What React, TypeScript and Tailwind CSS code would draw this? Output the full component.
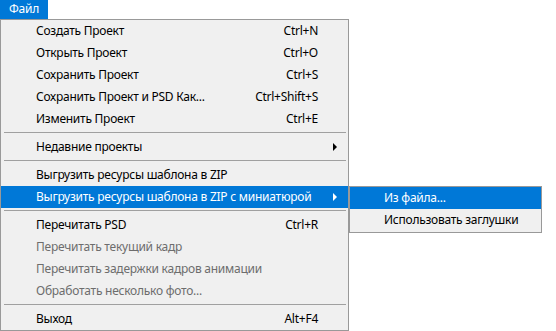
import React from "react";

type Item =
  | { type: "sep" }
  | { type: "item"; label: string; shortcut?: string; disabled?: boolean; sub?: boolean; active?: boolean };

const items: Item[] = [
  { type: "item", label: "Создать Проект", shortcut: "Ctrl+N" },
  { type: "item", label: "Открыть Проект", shortcut: "Ctrl+O" },
  { type: "item", label: "Сохранить Проект", shortcut: "Ctrl+S" },
  { type: "item", label: "Сохранить Проект и PSD Как...", shortcut: "Ctrl+Shift+S" },
  { type: "item", label: "Изменить Проект", shortcut: "Ctrl+E" },
  { type: "sep" },
  { type: "item", label: "Недавние проекты", sub: true },
  { type: "sep" },
  { type: "item", label: "Выгрузить ресурсы шаблона в ZIP" },
  { type: "item", label: "Выгрузить ресурсы шаблона в ZIP с миниатюрой", sub: true, active: true },
  { type: "sep" },
  { type: "item", label: "Перечитать PSD", shortcut: "Ctrl+R" },
  { type: "item", label: "Перечитать текущий кадр", disabled: true },
  { type: "item", label: "Перечитать задержки кадров анимации", disabled: true },
  { type: "item", label: "Обработать несколько фото...", disabled: true },
  { type: "sep" },
  { type: "item", label: "Выход", shortcut: "Alt+F4" },
];

function Arrow({ white }: { white?: boolean }) {
  return (
    <svg width="4" height="8" viewBox="0 0 4 8" className="absolute right-[11px] top-[7px]">
      <path d="M0 0 L4 4 L0 8 Z" fill={white ? "#ffffff" : "#000000"} />
    </svg>
  );
}

export default function App() {
  return (
    <div
      className="relative w-[556px] h-[331px] overflow-hidden bg-white text-[12px] leading-[22px] tracking-[-0.25px]"
      style={{ fontFamily: '"Segoe UI", "Noto Sans", sans-serif' }}
    >
      <div className="flex h-[19px]">
        <div className="w-[48px] h-[19px] bg-[#0078d7] text-white pl-[9px] leading-[18px]">Файл</div>
      </div>
      <div className="w-[349px] border border-[#999999] bg-[#f0f0f0] flex flex-col">
        {items.map((it, i) =>
          it.type === "sep" ? (
            <div key={i} className="h-[6px] pt-[2px] pl-[3px] pr-[2px]">
              <div className="h-px bg-[#a0a0a0]" />
            </div>
          ) : (
            <div
              key={i}
              className={
                "relative h-[22px] flex justify-between pl-[35px] pr-[30px] whitespace-nowrap " +
                (it.active ? "bg-[#0078d7] text-white" : it.disabled ? "text-[#6d6d6d]" : "text-black")
              }
            >
              <span>{it.label}</span>
              {it.shortcut && <span>{it.shortcut}</span>}
              {it.sub && <Arrow white={it.active} />}
            </div>
          )
        )}
      </div>
      <div className="absolute left-[349px] top-[186px] w-[193px] border border-[#999999] bg-[#f0f0f0] flex flex-col pb-px">
        <div className="h-[22px] bg-[#0078d7] text-white pl-[34px] whitespace-nowrap">Из файла...</div>
        <div className="h-[22px] text-black pl-[34px] whitespace-nowrap">Использовать заглушки</div>
      </div>
    </div>
  );
}
